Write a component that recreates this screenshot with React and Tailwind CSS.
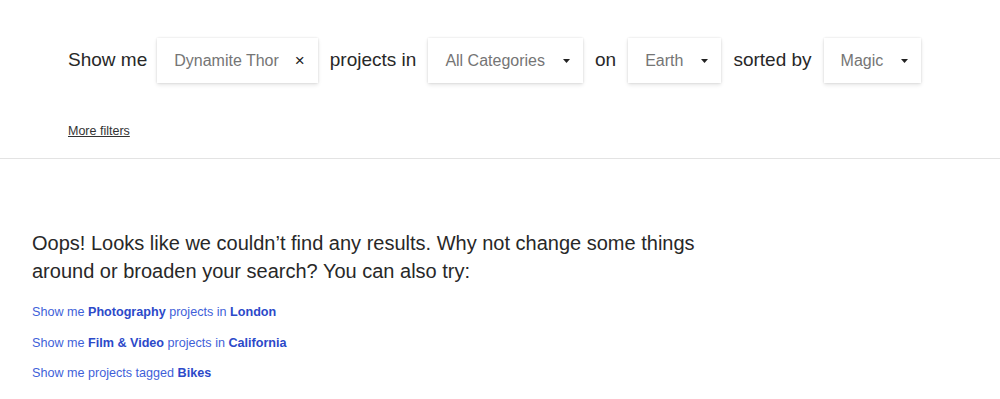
function Caret() {
    return (
        <svg width="7" height="4" viewBox="0 0 7 4" className="ml-[18px] shrink-0">
            <path d="M0 0h7L3.5 4z" fill="#222" />
        </svg>
    );
}

function Box({ children, clear }) {
    return (
        <div className="h-[45px] flex items-center pl-[17px] pr-[13px] bg-white shadow-[0_0_2px_rgba(0,0,0,0.12),0_2px_4px_rgba(0,0,0,0.1)] text-[16px] text-[#757575]">
            <span>{children}</span>
            {clear ? (
                <span className="ml-[16px] text-[17px] leading-none text-[#222]">×</span>
            ) : (
                <Caret />
            )}
        </div>
    );
}

function Suggestion({ children }) {
    return (
        <a href="#" className="block h-[30.5px] leading-[30.5px] text-[12.6px] text-[#3f5fd9]">
            {children}
        </a>
    );
}

export default function App() {
    return (
        <div className="min-h-[399px] bg-white font-['Liberation_Sans',Arial,sans-serif] text-[#282828]">
            {/* FILTER SENTENCE */}
            <div className="border-b border-[#e3e3e3] pl-[68px] pt-[38px] pb-[19px]">
                <div className="flex items-center gap-[12px] text-[19px]">
                    <span className="mr-[-2px]">Show me</span>
                    <Box clear>Dynamite Thor</Box>
                    <span>projects in</span>
                    <Box>All Categories</Box>
                    <span>on</span>
                    <Box>Earth</Box>
                    <span>sorted by</span>
                    <Box>Magic</Box>
                </div>
                <a href="#" className="block mt-[40px] text-[12.5px] leading-[16px] text-[#333] underline">
                    More filters
                </a>
            </div>

            {/* NO RESULTS */}
            <div className="px-[32px] pt-[70px]">
                <p className="max-w-[700px] text-[20px] leading-[28px] text-[#282828]">
                    Oops! Looks like we couldn’t find any results. Why not change some things around or broaden your search? You can also try:
                </p>
                <div className="mt-[12px]">
                    <Suggestion>
                        Show me <b className="text-[#2c49c9]">Photography</b> projects in <b className="text-[#2c49c9]">London</b>
                    </Suggestion>
                    <Suggestion>
                        Show me <b className="text-[#2c49c9]">Film &amp; Video</b> projects in <b className="text-[#2c49c9]">California</b>
                    </Suggestion>
                    <Suggestion>
                        Show me projects tagged <b className="text-[#2c49c9]">Bikes</b>
                    </Suggestion>
                </div>
            </div>
        </div>
    );
}
